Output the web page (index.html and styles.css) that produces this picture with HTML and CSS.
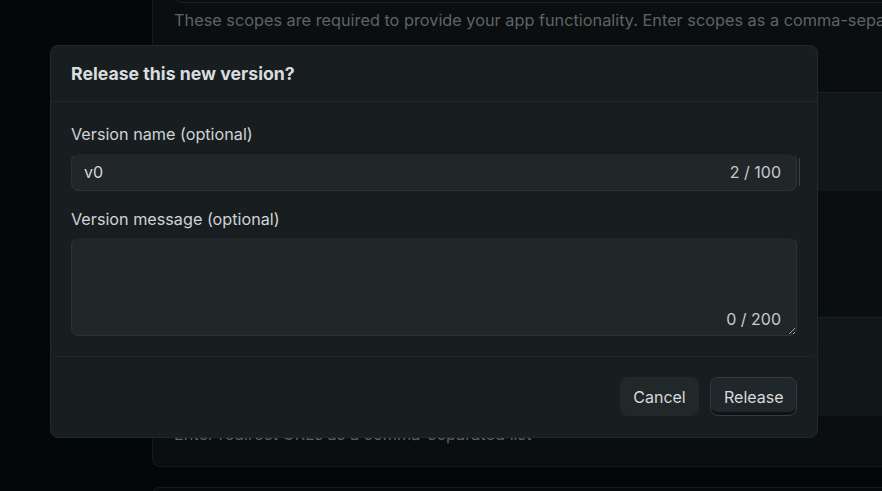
FILE: index.html
```html
<!DOCTYPE html>
<html lang="en">
<head>
<meta charset="utf-8">
<title>Release this new version?</title>
<link rel="stylesheet" href="styles.css">
</head>
<body>
<div class="page">
  <div class="bg-card">
    <div class="scope-input"></div>
    <p class="hint">These scopes are required to provide your app functionality. Enter scopes as a comma-separated list.</p>
    <div class="bg-row bg-row-light first"></div>
    <div class="bg-row bg-row-dark"></div>
    <div class="bg-row bg-row-light second"></div>
    <p class="hint hint-bottom">Enter redirect URLs as a comma-separated list</p>
  </div>
  <div class="bg-card bg-card-next"></div>
</div>

<div class="modal" role="dialog" aria-labelledby="modal-title">
  <div class="modal-header">
    <h2 id="modal-title" class="modal-title">Release this new version?</h2>
  </div>
  <div class="modal-body">
    <label class="field-label" for="vname">Version name (optional)</label>
    <div class="field field-input">
      <input id="vname" class="text-input" type="text" value="v0">
      <span class="counter counter-input">2 / 100</span>
    </div>
    <label class="field-label field-label-second" for="vmsg">Version message (optional)</label>
    <div class="field field-area">
      <textarea id="vmsg" class="text-area"></textarea>
      <span class="counter counter-area">0 / 200</span>
    </div>
  </div>
  <div class="modal-footer">
    <button class="btn btn-cancel" type="button">Cancel</button>
    <button class="btn btn-release" type="button">Release</button>
  </div>
</div>
</body>
</html>
```

FILE: styles.css
```css
* { box-sizing: border-box; }

html, body {
  margin: 0;
  padding: 0;
  height: 100%;
  overflow: hidden;
}

body {
  background: #040708;
  font-family: Inter, "Noto Sans", sans-serif;
  color: #d4d8da;
}

.page {
  width: 100%;
  height: 100%;
  overflow: hidden;
}

.bg-card {
  margin: -40px 0 0 152px;
  background: #0b0e0f;
  border: 1px solid #151a1c;
  border-right: none;
  border-radius: 8px 0 0 8px;
}

.scope-input {
  margin-left: 22px;
  height: 42px;
  border: 1px solid #1a2022;
  border-top: none;
  border-right: none;
  border-radius: 0 0 0 8px;
}

.hint {
  margin: 5px 0 0 21px;
  font-size: 16.3px;
  line-height: 24px;
  color: #5c6467;
  white-space: nowrap;
}

.bg-row {
  margin: 0;
}

.bg-row-light {
  background: #111617;
  border-top: 1px solid #1b2123;
}

.bg-row.first {
  margin-top: 60px;
  height: 99px;
}

.bg-row-dark {
  height: 126px;
}

.bg-row.second {
  height: 99px;
}

.hint-bottom {
  margin-top: 6px;
  margin-bottom: 20px;
}

.bg-card-next {
  margin-top: 20px;
  height: 40px;
  border-radius: 8px 0 0 0;
  background: #080b0c;
}

/* Modal overlay */
.modal {
  position: absolute;
  left: 50px;
  top: 45px;
  width: 768px;
  height: 393px;
  background: #181e20;
  border: 1px solid #1b2a30;
  border-radius: 8px;
  display: flex;
  flex-direction: column;
}

.modal-header {
  height: 56px;
  padding: 0 20px;
  display: flex;
  align-items: center;
  border-bottom: 1px solid #1d2a30;
}

.modal-title {
  margin: 0;
  font-size: 17.7px;
  font-weight: 700;
  color: #d9dddf;
}

.modal-body {
  padding: 20px 20px 20px;
  display: flex;
  flex-direction: column;
  border-bottom: 1px solid #1d2a30;
  border-radius: 0 0 8px 8px;
}

.field-label {
  font-size: 16.2px;
  line-height: 24px;
  color: #cfd3d5;
  margin-bottom: 7px;
}

.field-label-second {
  margin-top: 16px;
  margin-bottom: 6px;
}

.field {
  position: relative;
}

.text-input,
.text-area {
  display: block;
  width: 100%;
  background: #212729;
  border: 1px solid #2b3336;
  border-top-color: #151a1c;
  border-radius: 8px;
  color: #d4d8da;
  font-family: Inter, "Noto Sans", sans-serif;
  font-size: 16px;
  outline: none;
}

.text-input {
  height: 38px;
  padding: 0 80px 0 12px;
}

.field-input::after {
  content: "";
  position: absolute;
  right: -3px;
  top: 5px;
  width: 1px;
  height: 28px;
  background: #3a4245;
}

.text-area {
  height: 99px;
  padding: 10px 12px;
  resize: vertical;
}

.counter {
  position: absolute;
  right: 16px;
  font-size: 16px;
  line-height: 20px;
  color: #c6cbcd;
}

.counter-input {
  top: 9px;
}

.counter-area {
  bottom: 7px;
}

.modal-footer {
  flex: 1;
  display: flex;
  justify-content: flex-end;
  align-items: flex-start;
  gap: 11px;
  padding: 20px 20px 0;
}

.btn {
  height: 39px;
  padding: 0 13px;
  border-radius: 8px;
  font-family: Inter, "Noto Sans", sans-serif;
  font-size: 16px;
  color: #d6dadc;
  cursor: pointer;
}

.btn-cancel {
  background: #21282a;
  border: none;
  width: 79px;
}

.btn-release {
  width: 87px;
  background: #20272a;
  border: 1px solid #313a3d;
  box-shadow: inset 0 -3px 0 #0f1314;
}
```
